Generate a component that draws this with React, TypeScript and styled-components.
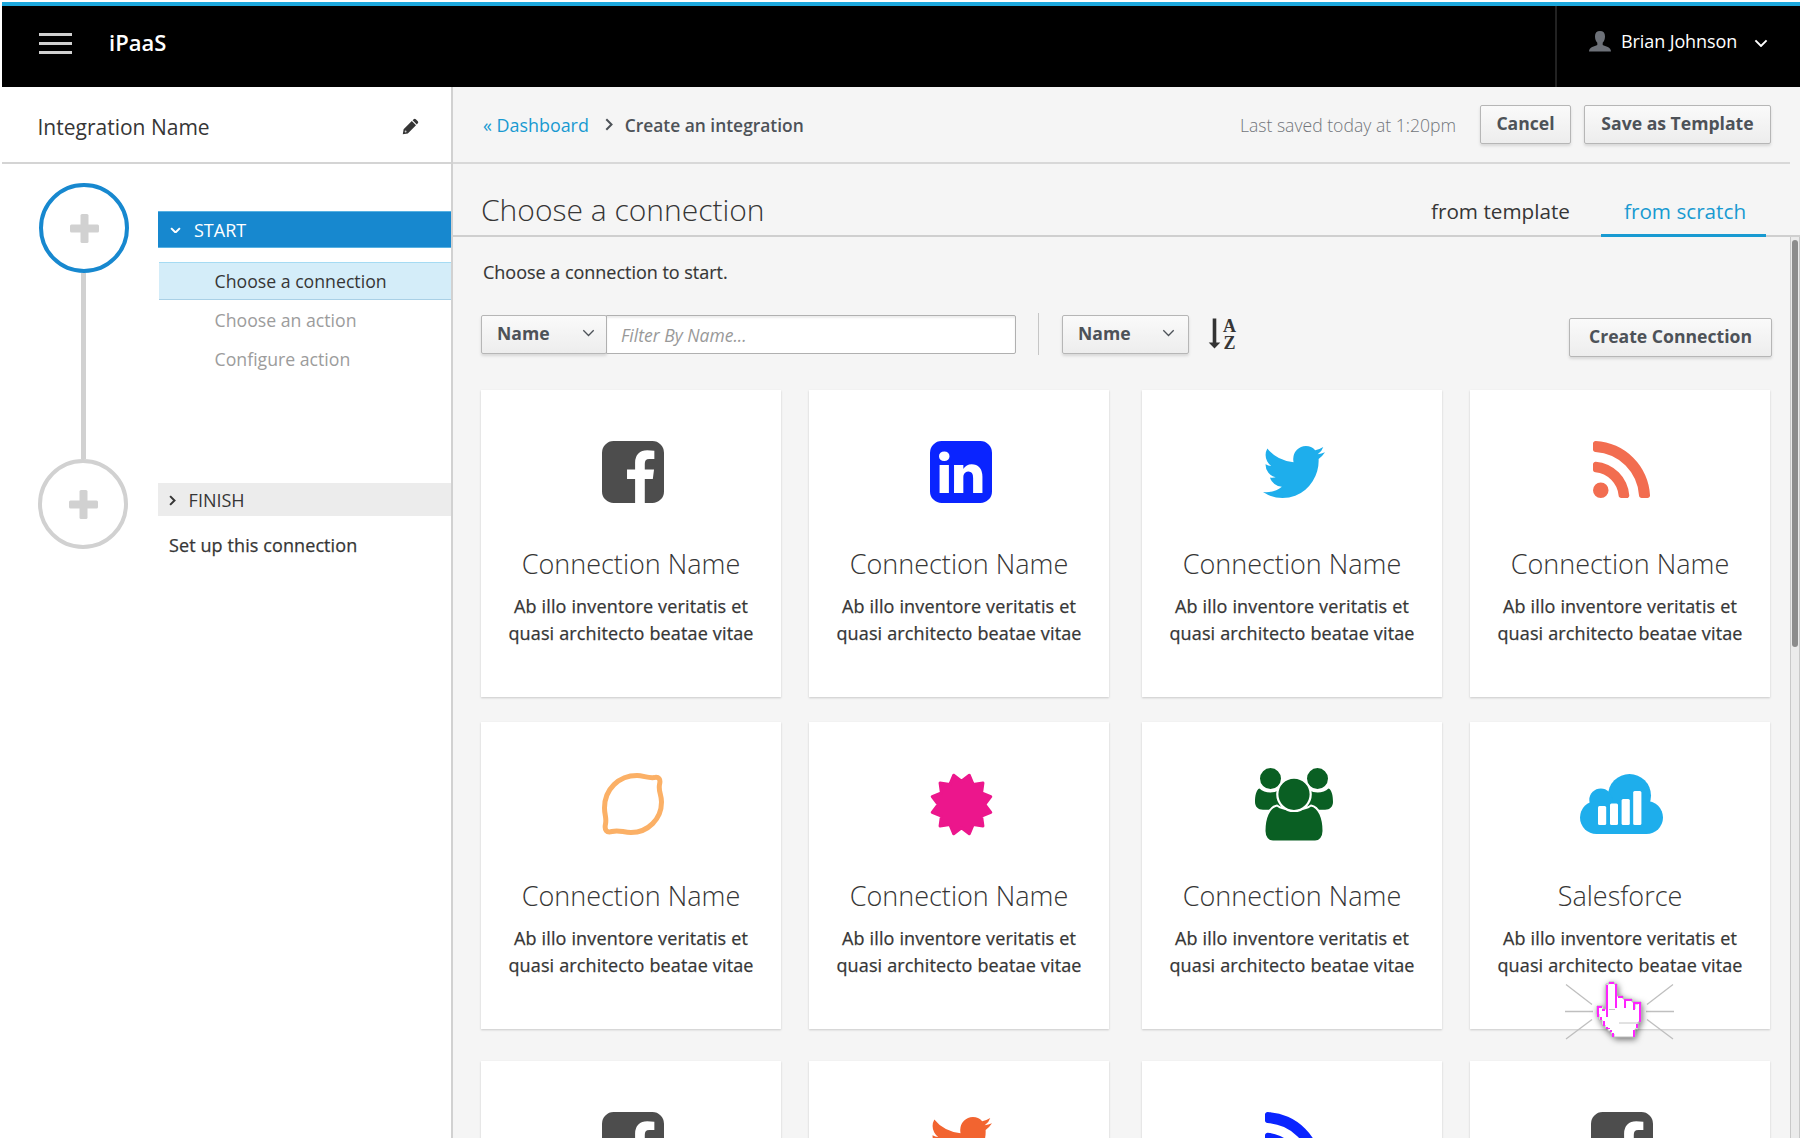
import React from "react";
import styled, { createGlobalStyle, css } from "styled-components";

const GlobalStyle = createGlobalStyle`
  *, *::before, *::after { box-sizing: border-box; }
  html, body { margin: 0; padding: 0; background: #fff; overflow: hidden; }
  body { font-family: "Open Sans", "Noto Sans", sans-serif; font-size: 18px; color: #363636; }
  h1, h2, p { margin: 0; }
  svg { display: block; flex: none; }
`;

/* ---------- Shell ---------- */

const Page = styled.div`
  display: flex;
  flex-direction: column;
  width: 1802px;
  height: 1138px;
  padding: 2px 2px 0;
  overflow: hidden;
`;

const Header = styled.header`
  display: flex;
  flex: none;
  height: 85px;
  background: #000;
  border-top: 4px solid #1ca8dd;
`;

const Burger = styled.button`
  display: flex;
  flex-direction: column;
  gap: 6px;
  width: 33px;
  margin: 27px 37px 0 37px;
  padding: 0;
  border: 0;
  background: none;
`;

const BurgerLine = styled.span`
  height: 3px;
  background: #d1d1d1;
`;

const Brand = styled.span`
  flex: 1;
  padding-top: 21px;
  font-size: 22px;
  line-height: 30px;
  font-weight: 600;
  color: #fff;
`;

const UserMenu = styled.div`
  display: flex;
  align-items: flex-start;
  width: 245px;
  padding: 25px 0 0 32px;
  border-left: 2px solid #222;
  color: #fff;
`;

const UserName = styled.span`
  width: 133px;
  margin-left: 10px;
  line-height: 20px;
  letter-spacing: -0.1px;
`;

const UserChevron = styled.span`
  padding-top: 8px;
`;

const Body = styled.div`
  display: flex;
  flex: 1;
  min-height: 0;
`;

/* ---------- Sidebar ---------- */

const Sidebar = styled.aside`
  display: flex;
  flex-direction: column;
  flex: none;
  width: 451px;
  border-right: 2px solid #d1d1d1;
  background: #fff;
`;

const SidebarTitle = styled.div`
  display: flex;
  align-items: center;
  justify-content: space-between;
  height: 77px;
  padding: 4px 32px 0 35.500px;
  border-bottom: 2px solid #d4d4d4;
  font-size: 21px;
`;

const Steps = styled.div`
  display: flex;
  flex: 1;
`;

const Rail = styled.div`
  display: flex;
  flex-direction: column;
  align-items: center;
  width: 156px;
  padding: 19px 25px 0 32px;
`;

const StepCircle = styled.div<{ $active?: boolean }>`
  display: flex;
  align-items: center;
  justify-content: center;
  flex: none;
  width: 90px;
  height: 90px;
  margin-left: ${(p) => (p.$active ? "1px" : "-1px")};
  border: 4px solid ${(p) => (p.$active ? "#1788cf" : "#d1d1d1")};
  border-radius: 50%;
`;

const Connector = styled.div`
  width: 5px;
  height: 186px;
  background: #d1d1d1;
`;

const StepList = styled.div`
  flex: 1;
  padding-top: 47px;
`;

const StepHeader = styled.div<{ $active?: boolean }>`
  display: flex;
  align-items: center;
  gap: 13px;
  line-height: 24px;
  ${(p) =>
    p.$active
      ? css`
          height: 37px;
          padding: 1px 0 0 12px;
          background: #1788cf;
          color: #fff;
          border-top: 1px solid #57b1e2;
          border-bottom: 1px solid #57b1e2;
        `
      : css`
          height: 33px;
          margin-top: 105px;
          padding: 1px 0 0 11px;
          background: #ececec;
        `}
`;

const SubStep = styled.div<{ $current?: boolean }>`
  display: flex;
  align-items: center;
  height: 39px;
  padding-left: 55.500px;
  margin-left: 1px;
  font-size: 17.7px;
  color: #9c9c9c;
  ${(p) =>
    p.$current &&
    css`
      height: 38px;
      margin-top: 14px;
      background: #d4edf9;
      border-top: 1px solid #a5dbf3;
      border-bottom: 1px solid #a9d0e6;
      color: #363636;
    `}
`;

const StepNote = styled.p`
  padding: 17px 0 0 11px;
  line-height: 24px;
  letter-spacing: 0.1px;
  -webkit-text-stroke: 0.25px currentColor;
`;

/* ---------- Main column ---------- */

const Main = styled.main`
  display: flex;
  flex-direction: column;
  flex: 1;
  min-width: 0;
  background: #f5f5f5;
`;

const ActionBar = styled.div`
  display: flex;
  align-items: flex-start;
  flex: none;
  height: 77px;
  margin-right: 10px;
  padding: 18px 19px 0 30px;
  border-bottom: 2px solid #d8d8d8;
`;

const Breadcrumb = styled.nav`
  display: flex;
  align-items: center;
  flex: 1;
  height: 39px;
`;

const CrumbLink = styled.a`
  margin-right: 16px;
  font-size: 17.9px;
  color: #189ad1;
`;

const CrumbCurrent = styled.span`
  margin-left: 12px;
  font-size: 17.4px;
  font-weight: 600;
  color: #4d5258;
`;

const Saved = styled.span`
  margin-right: 24px;
  font-size: 17.6px;
  line-height: 41px;
  font-weight: 300;
  color: #72767b;
`;

const Button = styled.button<{ $width: number }>`
  display: flex;
  align-items: center;
  justify-content: center;
  flex: none;
  width: ${(p) => p.$width}px;
  height: 39px;
  padding: 0 0 3px;
  border: 1px solid #b6b6b6;
  border-radius: 2px;
  background: linear-gradient(#fafafa, #ededed);
  box-shadow: 0 2px 3px rgba(0, 0, 0, 0.12);
  font: 700 17.6px "Open Sans", "Noto Sans", sans-serif;
  color: #4d5258;
`;

const SaveButton = styled(Button)`
  margin-left: 13px;
`;

const DropButton = styled(Button)<{ $end?: number }>`
  justify-content: space-between;
  padding: 0 ${(p) => p.$end ?? 11}px 3px 15px;
`;

const TitleBar = styled.div`
  display: flex;
  align-items: flex-start;
  justify-content: space-between;
  flex: none;
  height: 73px;
  padding: 0 34px 0 28px;
  border-bottom: 2px solid #cfcfcf;
`;

const Title = styled.h1`
  padding-top: 26px;
  font-size: 30px;
  line-height: 40px;
  font-weight: 300;
`;

const Tabs = styled.div`
  display: flex;
  align-self: stretch;
`;

const Tab = styled.a<{ $active?: boolean }>`
  width: ${(p) => (p.$active ? "165px" : "193px")};
  height: 73px;
  padding: 33px 0 0 23px;
  font-size: 20.700px;
  line-height: 28px;
  color: ${(p) => (p.$active ? "#189ad1" : "#363636")};
  border-bottom: 3px solid ${(p) => (p.$active ? "#189ad1" : "transparent")};
`;

const ScrollArea = styled.div`
  display: flex;
  flex: 1;
  min-height: 0;
`;

const Content = styled.section`
  flex: 1;
  min-width: 0;
  padding: 0 20px 0 28px;
  overflow: hidden;
`;

const ScrollTrack = styled.div`
  flex: none;
  width: 10px;
  padding: 3px 1px 0 1px;
  border-left: 1px solid #c8c8c8;
  border-right: 1px solid #c8c8c8;
  background: #ebebeb;
`;

const ScrollThumb = styled.div`
  width: 6px;
  height: 407px;
  border-radius: 3px;
  background: #8c8c8c;
`;

const Intro = styled.p`
  padding: 22px 0 0 2px;
  line-height: 26px;
  letter-spacing: -0.02px;
  -webkit-text-stroke: 0.15px currentColor;
`;

const FilterBar = styled.div`
  display: flex;
  align-items: flex-start;
  height: 45px;
  margin-top: 28px;
`;

const FilterGroup = styled.div`
  display: flex;
  margin-top: 2px;
`;

const FilterInput = styled.input`
  width: 410px;
  height: 39px;
  margin-left: -1px;
  padding: 1px 14px 0;
  border: 1px solid #b0b0b0;
  border-radius: 0 2px 2px 0;
  background: #fff;
  box-shadow: inset 0 2px 2px rgba(0, 0, 0, 0.08);
  font: italic 400 17.5px "Open Sans", "Noto Sans", sans-serif;
  color: #999;
  &::placeholder { color: #999; opacity: 1; }
`;

const FilterDivider = styled.div`
  width: 1px;
  height: 42px;
  margin: 0 23px 0 22px;
  background: #c6c6c6;
`;

const SortDrop = styled.div`
  margin: 2px 19px 0 0;
`;

const SortIcon = styled.div`
  display: flex;
  gap: 2px;
  margin: 5px auto 0 0;
`;

const SortLetters = styled.div`
  display: flex;
  flex-direction: column;
  align-items: center;
  font: 700 18px/17px "Liberation Serif", serif;
`;

const CreateSlot = styled.div`
  margin: 5px -2px 0 0;
`;

const Cards = styled.div`
  display: flex;
  flex-direction: column;
  margin-top: 32px;
`;

const CardRow = styled.div<{ $gap: number }>`
  display: flex;
  gap: 33px;
  margin-bottom: ${(p) => p.$gap}px;
`;

const CardPair = styled.div`
  display: flex;
  gap: 28px;
`;

const Card = styled.article`
  display: flex;
  flex-direction: column;
  align-items: center;
  flex: none;
  width: 300px;
  height: 307px;
  padding-top: 45px;
  background: #fff;
  box-shadow: 0 1px 2px rgba(0, 0, 0, 0.18);
  text-align: center;
`;

const CardIcon = styled.div`
  display: flex;
  align-items: center;
  justify-content: center;
  height: 74px;
  margin-left: 4px;
`;

const CardName = styled.h2`
  margin-top: 37px;
  font-size: 27px;
  line-height: 36px;
  font-weight: 300;
`;

const CardText = styled.p`
  margin-top: 11px;
  line-height: 27px;
  letter-spacing: 0.15px;
  white-space: pre-line;
  -webkit-text-stroke: 0.25px currentColor;
`;

const Pointer = styled.div`
  position: absolute;
  left: 1560px;
  top: 975px;
`;

/* ---------- Icons ---------- */

type ChevronProps = { size?: number; color?: string; weight?: number; right?: boolean };

const Chevron = ({ size = 14, color = "currentColor", weight = 2, right = false }: ChevronProps) => (
  <svg
    width={right ? size * 0.6 : size}
    height={right ? size : size * 0.6}
    viewBox={right ? "0 0 6 10" : "0 0 10 6"}
    fill="none"
    stroke={color}
    strokeWidth={(weight * 10) / size}
  >
    <path d={right ? "M1 1l4 4-4 4" : "M1 1l4 4 4-4"} />
  </svg>
);

const Pencil = () => (
  <svg width="17" height="17" viewBox="0 0 17 17" fill="#363636">
    <path d="M11.700 1.200a1.500 1.500 0 0 1 2.100 0l2 2a1.500 1.500 0 0 1 0 2.100L14.800 6.400 10.600 2.200zM9.800 3l4.200 4.200-8.200 8.300L.8 16.300l.8-5z" />
    <circle cx="3.600" cy="13.500" r="0.900" fill="#ccc" />
  </svg>
);

const Plus = () => (
  <svg width="29" height="29" viewBox="0 0 29 29" fill="#d1d1d1">
    <rect x="10.500" width="8" height="29" rx="1.500" />
    <rect y="10.500" width="29" height="8" rx="1.500" />
  </svg>
);

const Person = () => (
  <svg width="22" height="21" viewBox="0 0 22 21" fill="#6d7178">
    <path d="M11 0c3.200 0 5 1.900 5 5.200 0 2.700-.8 5-2.300 6.500v2.300c2.600 1.400 8.300 2 8.300 6.600H0c0-4.600 5.700-5.200 8.300-6.600v-2.300C6.800 10.200 6 7.900 6 5.200 6 1.900 7.800 0 11 0z" />
  </svg>
);

const SortArrow = () => (
  <svg width="13" height="31" viewBox="0 0 13 31" fill="#333">
    <path d="M4.700 .5h3.600v24H12.300L6.500 30.500 .7 24.500H4.700z" />
  </svg>
);

const Facebook = () => (
  <svg width="62" height="62" viewBox="0 128 1536 1536" fill="#4d4d4d">
    <path d="M1248 128q119 0 203.500 84.500t84.500 203.500v960q0 119-84.500 203.500t-203.500 84.500h-188v-595h199l30-232h-229v-148q0-56 23.500-84t91.500-28l122-1v-207q-63-9-178-9-136 0-217.500 80t-81.500 226v171h-200v232h200v595h-532q-119 0-203.500-84.500t-84.500-203.500v-960q0-119 84.500-203.500t203.500-84.500h960z" />
  </svg>
);

const LinkedIn = () => (
  <svg width="62" height="62" viewBox="0 128 1536 1536" fill="#0a24ff">
    <path d="M237 1414h231v-694h-231v694zM483 506q-1-52-36-86t-93-34-94.500 34-36.500 86q0 51 35.500 85.500t92.500 34.500h1q59 0 95-34.500t36-85.500zM1068 1414h231v-398q0-154-73-233t-193-79q-136 0-209 117h2v-101h-231q3 66 0 694h231v-388q0-38 7-56 15-35 45-59.500t74-24.500q116 0 116 157v371zM1536 416v960q0 119-84.500 203.500t-203.500 84.500h-960q-119 0-203.500-84.500t-84.500-203.500v-960q0-119 84.500-203.500t203.500-84.500h960q119 0 203.500 84.500t84.500 203.500z" />
  </svg>
);

const Twitter = ({ color = "#1eaeec" }: { color?: string }) => (
  <svg width="62" height="52" viewBox="44 256 1576 1280" fill={color} preserveAspectRatio="none">
    <path d="M1620 408q-67 98-162 167 1 14 1 42 0 130-38 259.500t-115.500 248.500-184.500 210.500-258 146-323 54.500q-271 0-496-145 35 4 78 4 225 0 401-138-105-2-188-64.500t-114-159.500q33 5 61 5 43 0 85-11-112-23-185.500-111.500t-73.500-205.500v-4q68 38 146 41-66-44-105-115t-39-154q0-88 44-163 121 149 294.500 238.500t371.500 99.500q-8-38-8-74 0-134 94.500-228.500t228.500-94.500q140 0 236 102 109-21 205-78-37 115-142 178 93-10 186-50z" />
  </svg>
);

const RssSvg = styled.svg`
  margin: 0 2px 5px 0;
`;

const Rss = ({ color = "#f26d50" }: { color?: string }) => (
  <RssSvg width="57" height="57" viewBox="0 128 1408 1408" fill={color}>
    <path d="M384 1344q0 80-56 136t-136 56-136-56-56-136 56-136 136-56 136 56 56 136zm512 123q2 28-17 48-18 21-47 21h-135q-25 0-43-16.500t-20-41.500q-22-229-184.500-391.500t-391.500-184.500q-25-2-41.500-20t-16.500-43v-135q0-29 21-47 17-17 43-17h5q160 13 306 80.500t259 181.500q114 113 181.500 259t80.500 306zm512 2q2 27-18 47-18 20-46 20h-143q-26 0-44.500-17.500t-19.500-42.500q-12-215-101-408.500t-231.500-336-336-231.500-408.500-102q-25-1-42.500-19.500t-17.500-43.500v-143q0-28 20-46 18-18 44-18h3q262 13 501.500 120t425.500 294q187 186 294 425.500t120 501.500z" />
  </RssSvg>
);

const Lemon = () => (
  <svg width="62" height="62" viewBox="0 0 62 62" fill="none" stroke="#fbb066" strokeWidth="5" strokeLinejoin="round">
    <path d="M35 2.500C41 2.500 46 5.300 52 4.600C57 3.600 58.700 6 57.600 11C56 18 59.500 21 59.500 29C59.500 46 46 59.500 29 59.500C21 59.500 17 56.500 10 58.500C4.500 60 2.200 57 3.500 51C4.800 45 2.500 42 2.500 35C2.500 16 17 2.500 35 2.500Z" />
  </svg>
);

const burst = Array.from({ length: 24 }, (_, i) => {
  const angle = (i * 15 * Math.PI) / 180;
  const radius = i % 2 ? 30.3 : 23.2;
  return `${(31.5 + radius * Math.sin(angle)).toFixed(2)},${(31.5 - radius * Math.cos(angle)).toFixed(2)}`;
}).join(" ");

const Burst = () => (
  <svg width="63" height="63" viewBox="0 0 63 63" fill="#ec168c" stroke="#ec168c" strokeWidth="3" strokeLinejoin="round">
    <polygon points={burst} />
  </svg>
);

const Group = () => (
  <svg width="78" height="73" viewBox="0 0 78 73" fill="#0a5f23">
    <path d="M4.500 20.500C9 25 18 26 24 22L26 41.700H8C3 41.700 0 38.500 0 34C0 28 1.200 21.500 4.500 20.500Z" />
    <path d="M73.500 20.500C69 25 60 26 54 22L52 41.700H70C75 41.700 78 38.500 78 34C78 28 76.800 21.500 73.500 20.500Z" />
    <circle cx="15.500" cy="10.600" r="11.500" stroke="#fff" strokeWidth="2" />
    <circle cx="62.500" cy="10.600" r="11.500" stroke="#fff" strokeWidth="2" />
    <path d="M22 37.500C29 43 49 43 56 37.500C64 39 68.500 50 68.500 63C68.500 69 65 73.500 60 73.500H18C13 73.500 9.500 69 9.500 63C9.500 50 14 39 22 37.500Z" stroke="#fff" strokeWidth="2" />
    <circle cx="39" cy="26.300" r="16.700" stroke="#fff" strokeWidth="2.200" />
  </svg>
);

const CloudSvg = styled.svg`
  margin-right: 2px;
`;

const Cloud = () => (
  <CloudSvg width="83" height="60" viewBox="0 0 83 60" fill="#1eaeec">
    <circle cx="49.500" cy="21.500" r="21.500" />
    <circle cx="20.800" cy="26" r="11.500" />
    <circle cx="16.500" cy="43.500" r="16.500" />
    <circle cx="66.500" cy="43.500" r="16.500" />
    <path d="M16 28h51v32H16z" />
    <g fill="#fff">
      <rect x="18" y="32" width="8.200" height="19" rx="1.500" />
      <rect x="30" y="29.500" width="8" height="21.500" rx="1.500" />
      <rect x="41.600" y="25" width="8.200" height="26" rx="1.500" />
      <rect x="53.200" y="17" width="8.200" height="34" rx="1.500" />
    </g>
  </CloudSvg>
);

const HandShape = styled.path`
  filter: drop-shadow(1px 2px 3px rgba(0, 0, 0, 0.55));
`;

const ClickHand = () => (
  <svg width="120" height="74" viewBox="0 0 120 74">
    <path
      d="M6 9.500L32 29.500M5 36.500H33M6 64L32 44.500M113 9.500L87 29.500M114 36.500H86M113 64L87 44.500"
      fill="none"
      stroke="#bfbfbf"
      strokeWidth="1.300"
    />
    <HandShape
      d="M49 7H54V9H57V21H63V24H72V27H81V47H78V54H75V62H54V59H51V56H48V53H45V50H42V45H39V39H37V31H43V34H46V9H49Z"
      fill="#fff"
      stroke="#bdbdbd"
      strokeWidth="1"
    />
    <path d="M49 34.500H55M59 48H79M78 29H75V34" fill="none" stroke="#c4c4c4" strokeWidth="1" />
    <path
      d="M49 8H54M47 10V42M56 9V33M58 22H63M65 33V25H72M74 35V28H79M80 27V47M77 49V53M74 55V62M37 32H42M38 33V42M42 35H45M41 42V45M44 46V51M46 53H48M49 53V54M51 55V57M53 58V62"
      fill="none"
      stroke="#ff22ff"
      strokeWidth="2"
    />
  </svg>
);

/* ---------- Data ---------- */

type Connection = { name?: string; icon: React.ReactNode };

const rows: { gap: number; items: Connection[] }[] = [
  {
    gap: 25,
    items: [
      { name: "Connection Name", icon: <Facebook /> },
      { name: "Connection Name", icon: <LinkedIn /> },
      { name: "Connection Name", icon: <Twitter /> },
      { name: "Connection Name", icon: <Rss /> },
    ],
  },
  {
    gap: 32,
    items: [
      { name: "Connection Name", icon: <Lemon /> },
      { name: "Connection Name", icon: <Burst /> },
      { name: "Connection Name", icon: <Group /> },
      { name: "Salesforce", icon: <Cloud /> },
    ],
  },
  {
    gap: 0,
    items: [
      { icon: <Facebook /> },
      { icon: <Twitter color="#f26430" /> },
      { icon: <Rss color="#0a24ff" /> },
      { icon: <Facebook /> },
    ],
  },
];

const ConnectionCard = ({ name, icon }: Connection) => (
  <Card>
    <CardIcon>{icon}</CardIcon>
    {name && (
      <>
        <CardName>{name}</CardName>
        <CardText>{"Ab illo inventore veritatis et\nquasi architecto beatae vitae"}</CardText>
      </>
    )}
  </Card>
);

export default function App() {
  return (
    <Page>
      <GlobalStyle />
      <Header>
        <Burger>
          <BurgerLine />
          <BurgerLine />
          <BurgerLine />
        </Burger>
        <Brand>iPaaS</Brand>
        <UserMenu>
          <Person />
          <UserName>Brian Johnson</UserName>
          <UserChevron>
            <Chevron size={14} weight={1.9} />
          </UserChevron>
        </UserMenu>
      </Header>
      <Body>
        <Sidebar>
          <SidebarTitle>
            Integration Name
            <Pencil />
          </SidebarTitle>
          <Steps>
            <Rail>
              <StepCircle $active>
                <Plus />
              </StepCircle>
              <Connector />
              <StepCircle>
                <Plus />
              </StepCircle>
            </Rail>
            <StepList>
              <StepHeader $active>
                <Chevron size={11} />
                START
              </StepHeader>
              <SubStep $current>Choose a connection</SubStep>
              <SubStep>Choose an action</SubStep>
              <SubStep>Configure action</SubStep>
              <StepHeader>
                <Chevron size={11} right />
                FINISH
              </StepHeader>
              <StepNote>Set up this connection</StepNote>
            </StepList>
          </Steps>
        </Sidebar>
        <Main>
          <ActionBar>
            <Breadcrumb>
              <CrumbLink>« Dashboard</CrumbLink>
              <Chevron size={13} right color="#4d5258" />
              <CrumbCurrent>Create an integration</CrumbCurrent>
            </Breadcrumb>
            <Saved>Last saved today at 1:20pm</Saved>
            <Button $width={91}>Cancel</Button>
            <SaveButton $width={187}>Save as Template</SaveButton>
          </ActionBar>
          <TitleBar>
            <Title>Choose a connection</Title>
            <Tabs>
              <Tab>from template</Tab>
              <Tab $active>from scratch</Tab>
            </Tabs>
          </TitleBar>
          <ScrollArea>
            <Content>
              <Intro>Choose a connection to start.</Intro>
              <FilterBar>
                <FilterGroup>
                  <DropButton $width={126}>
                    Name
                    <Chevron size={13} weight={1.3} />
                  </DropButton>
                  <FilterInput placeholder="Filter By Name..." />
                </FilterGroup>
                <FilterDivider />
                <SortDrop>
                  <DropButton $width={127} $end={13}>
                    Name
                    <Chevron size={13} weight={1.3} />
                  </DropButton>
                </SortDrop>
                <SortIcon>
                  <SortArrow />
                  <SortLetters>
                    <span>A</span>
                    <span>Z</span>
                  </SortLetters>
                </SortIcon>
                <CreateSlot>
                  <Button $width={203}>Create Connection</Button>
                </CreateSlot>
              </FilterBar>
              <Cards>
                {rows.map((row, index) => (
                  <CardRow key={index} $gap={row.gap}>
                    {[row.items.slice(0, 2), row.items.slice(2)].map((pair, half) => (
                      <CardPair key={half}>
                        {pair.map((item, i) => (
                          <ConnectionCard key={i} {...item} />
                        ))}
                      </CardPair>
                    ))}
                  </CardRow>
                ))}
              </Cards>
            </Content>
            <ScrollTrack>
              <ScrollThumb />
            </ScrollTrack>
          </ScrollArea>
        </Main>
      </Body>
      <Pointer>
        <ClickHand />
      </Pointer>
    </Page>
  );
}
